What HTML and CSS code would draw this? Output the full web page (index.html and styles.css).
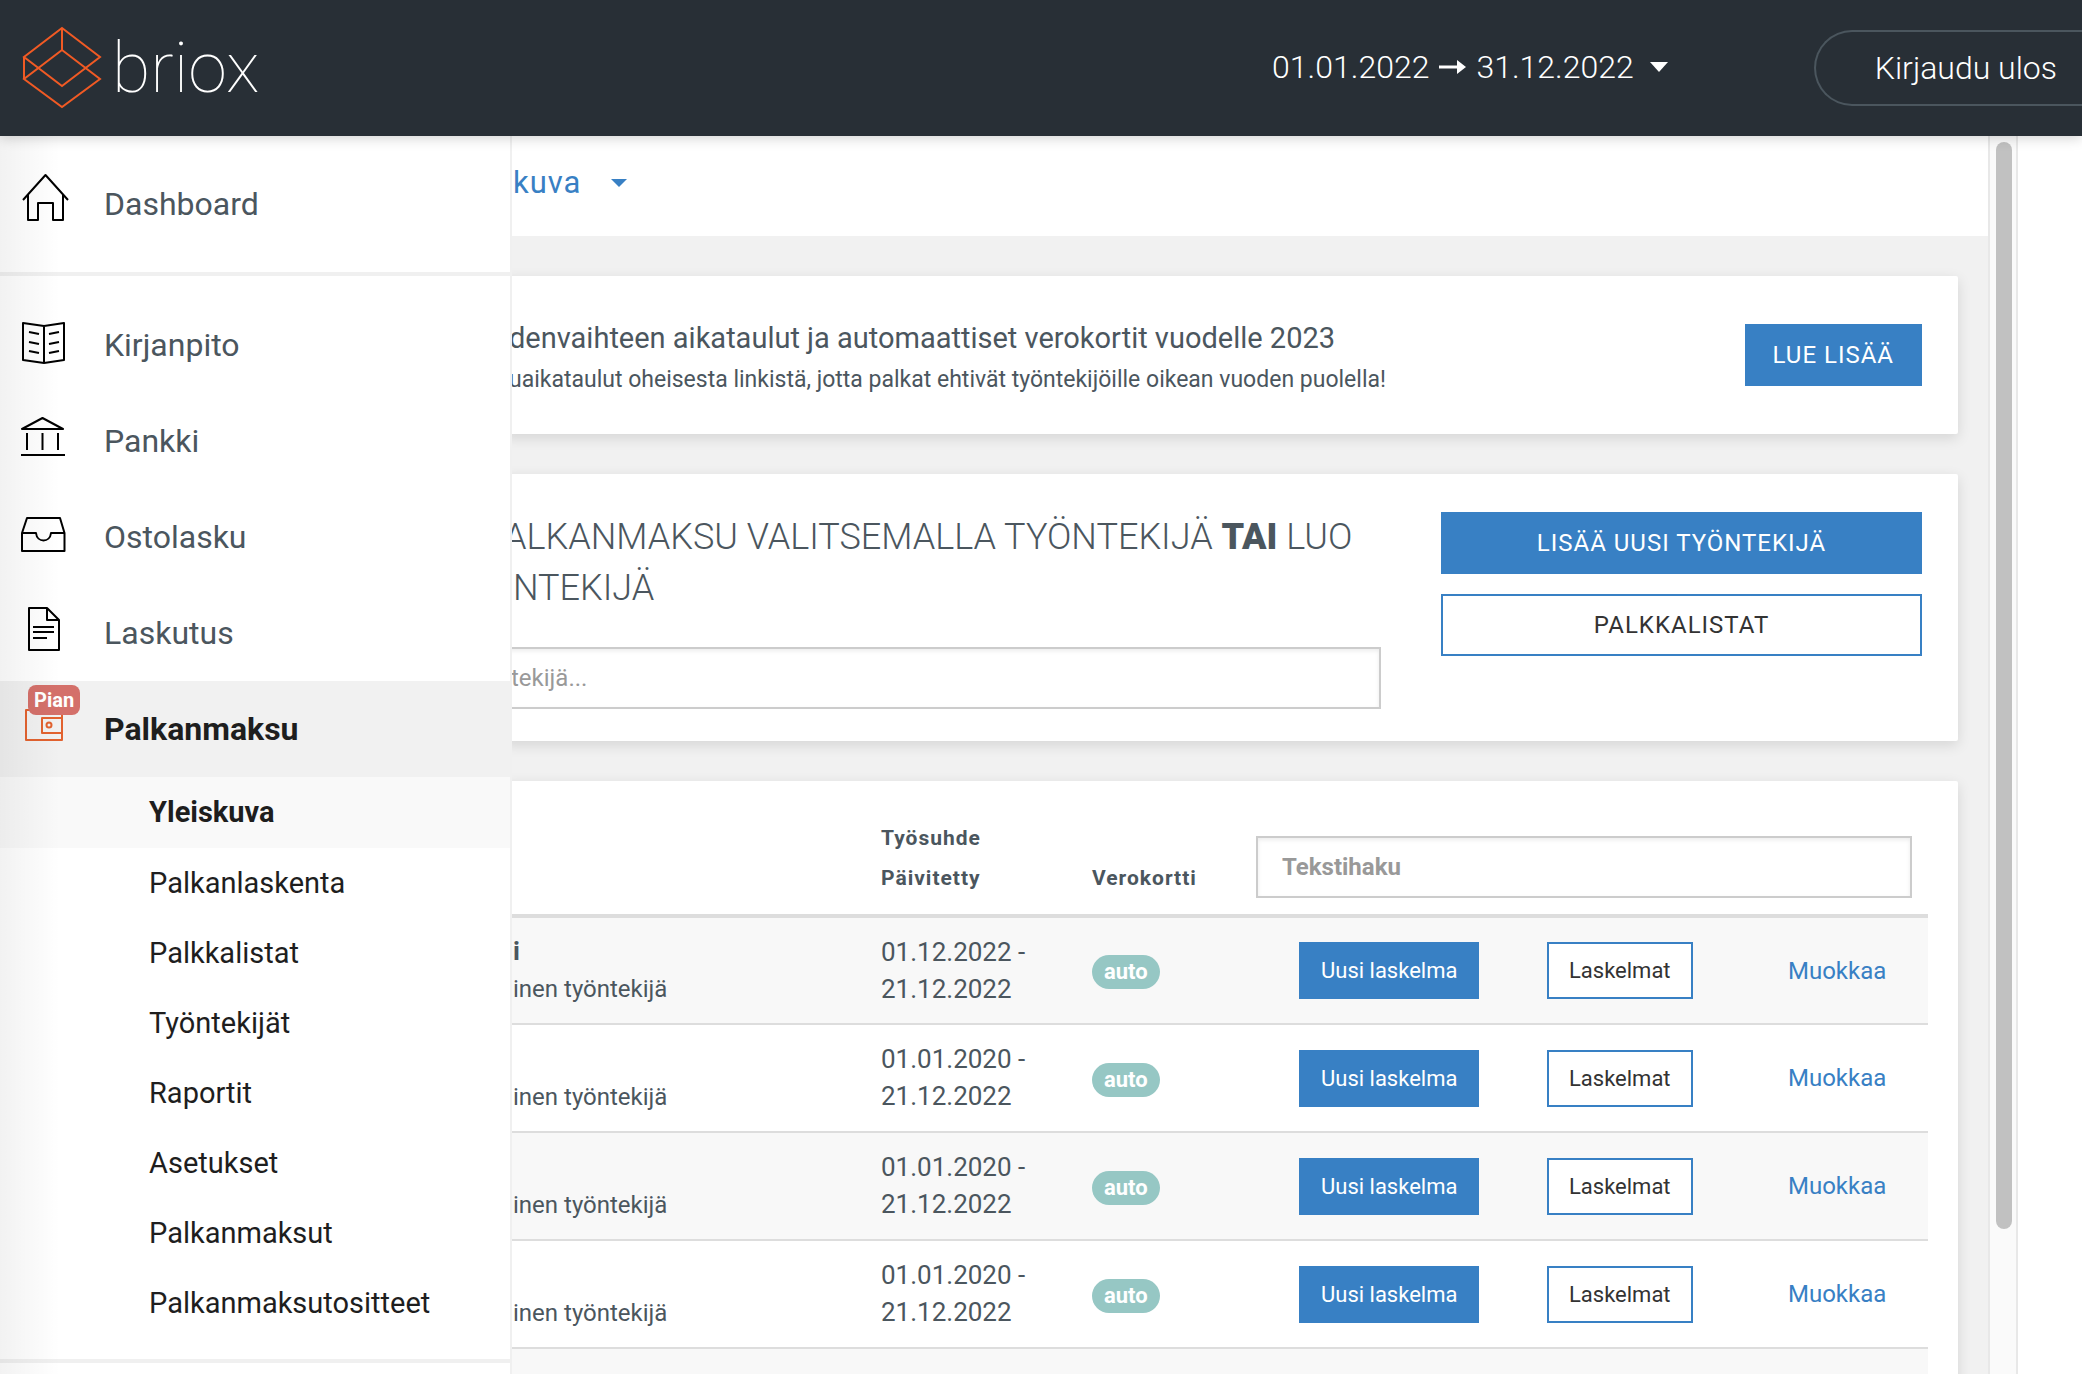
FILE: index.html
```html
<!DOCTYPE html>
<html lang="fi">
<head>
<meta charset="utf-8">
<meta name="viewport" content="width=device-width, initial-scale=1">
<title>Briox</title>
<link rel="stylesheet" href="styles.css">
</head>
<body>
<header class="topbar">
  <a class="brand" href="#">
    <svg class="brand-mark" viewBox="0 0 80 84" aria-hidden="true"><path d="M40 2 78 31 40 60 2 31ZM40 24 78 53 40 81 2 53ZM40 2V24M2 31V53"/></svg>
    <span class="brand-name">briox</span>
  </a>
  <button class="period" type="button">01.01.2022
    <svg class="arrow" viewBox="0 0 27 20" aria-hidden="true"><path d="M0 10H20" stroke="#fff" stroke-width="3"/><path d="M18 3 27 10 18 17Z" fill="#fff"/></svg>
    31.12.2022 <span class="caret"></span></button>
  <button class="logout" type="button">Kirjaudu ulos</button>
</header>
<div class="shell">
  <nav class="sidebar">
    <ul class="menu">
      <li><a class="menu-link" href="#"><svg class="icon" viewBox="0 0 48 48" aria-hidden="true"><path d="M3 22 25.500 -3 48 22M8 17V42H18V25H33V42H43V17"/></svg>Dashboard</a></li>
    </ul>
    <ul class="menu">
      <li><a class="menu-link" href="#"><svg class="icon" viewBox="0 0 48 48" aria-hidden="true"><path d="M3 4 24 7 44 4V41L24 44 3 41ZM24 7V44M9 13 19 15M9 23 19 25M9 32 19 34M29 15 39 13M29 25 39 23M29 34 39 32"/></svg>Kirjanpito</a></li>
      <li><a class="menu-link" href="#"><svg class="icon" viewBox="0 0 48 48" aria-hidden="true"><path d="M2 14 22.500 3 43 14ZM7 18V35M22.500 18V35M38 18V35M1 40H45"/></svg>Pankki</a></li>
      <li><a class="menu-link" href="#"><svg class="icon" viewBox="0 0 48 48" aria-hidden="true"><path d="M2 22 7 7H40L44.500 22V40H2ZM2 22H16C17 32 30 32 31 22H44"/></svg>Ostolasku</a></li>
      <li><a class="menu-link" href="#"><svg class="icon" viewBox="0 0 48 48" aria-hidden="true"><path d="M9 1H27L39 13V43H9ZM27 1V13H39M13 20H34M13 25H34M13 31H27"/></svg>Laskutus</a></li>
      <li>
        <a class="menu-link active" href="#"><svg class="icon wallet" viewBox="0 0 48 48" aria-hidden="true"><path d="M6 7H42V37H6ZM42 15H22V30H42"/><circle cx="29" cy="22" r="2.500"/></svg><span class="badge">Pian</span>Palkanmaksu</a>
        <ul class="submenu">
          <li><a class="current" href="#">Yleiskuva</a></li>
          <li><a href="#">Palkanlaskenta</a></li>
          <li><a href="#">Palkkalistat</a></li>
          <li><a href="#">Työntekijät</a></li>
          <li><a href="#">Raportit</a></li>
          <li><a href="#">Asetukset</a></li>
          <li><a href="#">Palkanmaksut</a></li>
          <li><a href="#">Palkanmaksutositteet</a></li>
        </ul>
      </li>
    </ul>
  </nav>
  <main class="content">
    <div class="subbar"><button class="view-picker" type="button">kuva <span class="caret"></span></button></div>
    <div class="cards">
      <section class="card notice">
        <div>
          <h2 class="notice-title">denvaihteen aikataulut ja automaattiset verokortit vuodelle 2023</h2>
          <p class="notice-text">uaikataulut oheisesta linkistä, jotta palkat ehtivät työntekijöille oikean vuoden puolella!</p>
        </div>
        <button class="btn primary" type="button">LUE LISÄÄ</button>
      </section>
      <section class="card start">
        <div class="start-form">
          <h1 class="start-title">ALKANMAKSU VALITSEMALLA TYÖNTEKIJÄ <b>TAI</b> LUO <span class="second-line">NTEKIJÄ</span></h1>
          <input class="field employee" type="text" placeholder="tekijä..." aria-label="tekijä...">
        </div>
        <div class="start-actions">
          <button class="btn primary" type="button">LISÄÄ UUSI TYÖNTEKIJÄ</button>
          <button class="btn outline" type="button">PALKKALISTAT</button>
        </div>
      </section>
      <section class="card list">
        <table class="employees">
          <colgroup><col><col class="c-date"><col class="c-tax"><col class="c-new"><col class="c-slips"><col class="c-edit"></colgroup>
          <thead>
            <tr><th></th><th>Työsuhde<br>Päivitetty</th><th>Verokortti</th><th colspan="3" class="search"><input class="field" type="text" placeholder="Tekstihaku" aria-label="Tekstihaku"></th></tr>
          </thead>
          <tbody>
            <tr><td class="who"><b>i</b><br><span class="role">inen työntekijä</span></td><td>01.12.2022 -<br>21.12.2022</td><td><span class="pill">auto</span></td><td class="new"><button class="btn small primary" type="button">Uusi laskelma</button></td><td><button class="btn small outline" type="button">Laskelmat</button></td><td><a class="edit" href="#">Muokkaa</a></td></tr>
            <tr><td class="who"><br><span class="role">inen työntekijä</span></td><td>01.01.2020 -<br>21.12.2022</td><td><span class="pill">auto</span></td><td class="new"><button class="btn small primary" type="button">Uusi laskelma</button></td><td><button class="btn small outline" type="button">Laskelmat</button></td><td><a class="edit" href="#">Muokkaa</a></td></tr>
            <tr><td class="who"><br><span class="role">inen työntekijä</span></td><td>01.01.2020 -<br>21.12.2022</td><td><span class="pill">auto</span></td><td class="new"><button class="btn small primary" type="button">Uusi laskelma</button></td><td><button class="btn small outline" type="button">Laskelmat</button></td><td><a class="edit" href="#">Muokkaa</a></td></tr>
            <tr><td class="who"><br><span class="role">inen työntekijä</span></td><td>01.01.2020 -<br>21.12.2022</td><td><span class="pill">auto</span></td><td class="new"><button class="btn small primary" type="button">Uusi laskelma</button></td><td><button class="btn small outline" type="button">Laskelmat</button></td><td><a class="edit" href="#">Muokkaa</a></td></tr>
            <tr><td colspan="6"></td></tr>
          </tbody>
        </table>
      </section>
    </div>
  </main>
  <div class="scroll-track"><div class="scroll-thumb"></div></div>
</div>
</body>
</html>
```
FILE: styles.css
```css
* { box-sizing: border-box; }

body {
  margin: 0;
  height: 100vh;
  display: flex;
  flex-direction: column;
  overflow: hidden;
  background: #fff;
  color: #4b565e;
  font-family: Roboto, "Liberation Sans", sans-serif;
  font-size: 26px;
}

h1, h2, p, ul { margin: 0; padding: 0; }
ul { list-style: none; }
a { color: inherit; text-decoration: none; }
button, input { font-family: inherit; border-radius: 0; }
button { cursor: pointer; }

/* Top bar */
.topbar {
  flex: none;
  display: flex;
  align-items: center;
  height: 136px;
  padding-left: 22px;
  background: #282f36;
  color: #fff;
  box-shadow: 0 2px 12px rgba(0, 0, 0, .18);
  position: relative;
  z-index: 3;
}
.brand { display: flex; align-items: center; gap: 10px; }
.brand-mark { width: 80px; height: 84px; fill: none; stroke: #f15a24; stroke-width: 2; }
.brand-name { font-size: 70px; font-weight: 100; line-height: 80px; }
.period {
  display: flex;
  align-items: center;
  gap: 10px;
  margin-left: auto;
  margin-right: 146px;
  padding: 0 0 2px;
  border: 0;
  background: none;
  color: #fff;
  font-size: 32px;
  font-weight: 300;
}
.arrow { width: 27px; height: 20px; }
.caret {
  border: 9px solid transparent;
  border-top: 10px solid currentColor;
  border-bottom: 0;
}
.period .caret { margin-left: 6px; }
.logout {
  height: 76px;
  padding: 0 25px 0 59px;
  border: 2px solid #4b565e;
  border-right: 0;
  border-radius: 38px 0 0 38px;
  background: none;
  color: #fff;
  font-size: 32px;
  font-weight: 300;
}

.shell { flex: 1; display: flex; min-height: 0; padding-right: 64px; }

/* Side menu lies over the left edge of the page */
.sidebar {
  flex: none;
  width: 512px;
  margin-right: -8px;
  border-right: 2px solid #f0f0f0;
  background: #fff;
  position: relative;
  z-index: 2;
}
.sidebar::after {
  content: "";
  position: absolute;
  top: 0;
  bottom: 0;
  left: 0;
  width: 60px;
  background: linear-gradient(to right, rgba(0, 0, 0, .05), transparent);
  pointer-events: none;
}
.menu { padding: 20px 0; border-bottom: 4px solid #f0f0f0; }
.menu + .menu { padding: 21px 0; }
.menu-link {
  display: flex;
  align-items: center;
  gap: 35px;
  height: 96px;
  padding-left: 19px;
  font-size: 32px;
  position: relative;
}
.menu-link.active { background: #f1f1f1; color: #1e1e1e; font-weight: 700; }
.icon {
  width: 50px;
  height: 48px;
  margin-bottom: 4px;
  overflow: visible;
  fill: none;
  stroke: #000;
  stroke-width: 2;
  stroke-linejoin: round;
}
.icon.wallet { stroke: #e2622f; }
.badge {
  position: absolute;
  top: 4px;
  left: 28px;
  padding: 0 6px;
  border-radius: 8px;
  background: #d4706a;
  color: #fff;
  font-size: 20px;
  line-height: 30px;
}
.submenu a {
  display: block;
  padding-left: 149px;
  color: #1e1e1e;
  font-size: 29px;
  line-height: 70px;
}
.submenu a.current { background: #f9f9f9; font-weight: 700; line-height: 71px; }

/* Page content */
.content { flex: 1; min-width: 0; background: #f1f1f1; overflow: hidden; }
.subbar { height: 100px; padding: 25px 0 0 9px; background: #fff; }
.view-picker {
  display: flex;
  align-items: center;
  gap: 30px;
  padding: 0;
  border: 0;
  background: none;
  color: #3880c4;
  font-size: 31px;
  line-height: 44px;
  letter-spacing: 1px;
}
.view-picker .caret { border-width: 8px; border-bottom: 0; }
.cards { display: flex; flex-direction: column; gap: 40px; padding: 40px 30px 40px 0; }
.card { background: #fff; border-radius: 2px; box-shadow: 0 4px 14px rgba(0, 0, 0, .12); }

.btn {
  height: 62px;
  padding: 0 26px;
  border: 2px solid #3880c4;
  font-size: 24px;
  letter-spacing: 1px;
}
.btn.primary { background: #3880c4; color: #fff; }
.btn.outline { background: #fff; color: #333; }
.btn.small { height: 57px; padding: 0 20px; font-size: 22px; letter-spacing: 0; }

.field {
  display: block;
  width: 100%;
  height: 62px;
  padding: 0 24px;
  border: 2px solid #ccc;
  background: #fff;
  box-shadow: inset 0 2px 4px rgba(0, 0, 0, .08);
  color: #4b565e;
  font-size: 24px;
}
.field::placeholder { color: #999; opacity: 1; }

.notice {
  display: flex;
  align-items: center;
  justify-content: space-between;
  padding: 40px 36px 34px 5px;
}
.notice .btn { margin-bottom: 6px; }
.notice-title { font-size: 29px; font-weight: 400; line-height: 44px; }
.notice-text { font-size: 23px; line-height: 40px; }

.start {
  display: grid;
  grid-template-columns: 1fr 481px;
  gap: 60px;
  padding: 38px 36px 32px 0;
}
.start-title { margin-bottom: 33px; font-size: 36px; font-weight: 300; line-height: 51px; }
.start-title b { font-weight: 900; }
.second-line { display: block; padding-left: 9px; }
.field.employee { padding-left: 5px; }
.start-actions { display: flex; flex-direction: column; gap: 20px; }

.list { padding: 36px 30px 36px 0; }
.employees { width: 100%; table-layout: fixed; border-collapse: collapse; }
.c-date { width: 211px; }
.c-tax { width: 164px; }
.c-new { width: 291px; }
.c-slips { width: 241px; }
.c-edit { width: 140px; }
.employees th {
  height: 99px;
  padding: 0 0 16px;
  border-bottom: 4px solid #ddd;
  text-align: left;
  vertical-align: bottom;
  font-size: 21px;
  line-height: 40px;
  letter-spacing: 1px;
}
.employees th.search { padding: 0 16px 16px 0; }
.search .field { font-weight: 700; }
.employees td { height: 108px; padding: 0; border-bottom: 2px solid #ddd; line-height: 37px; }
.employees td.who { padding-left: 9px; }
.employees td.new { padding-left: 43px; }
.employees tbody tr:nth-child(odd) { background: #f8f8f8; }
.role { font-size: 24px; }
.pill {
  display: inline-block;
  padding: 0 12px;
  border-radius: 17px;
  background: #96c7c4;
  color: #fff;
  font-size: 22px;
  font-weight: 700;
  line-height: 34px;
}
.edit { color: #3880c4; font-size: 24px; }

/* Scrollbar */
.scroll-track {
  flex: none;
  width: 30px;
  padding: 6px 0 0 6px;
  border: solid #e8e8e8;
  border-width: 0 2px;
  background: #fafafa;
}
.scroll-thumb { width: 16px; height: calc(100% - 145px); border-radius: 8px; background: #c1c1c1; }
```
